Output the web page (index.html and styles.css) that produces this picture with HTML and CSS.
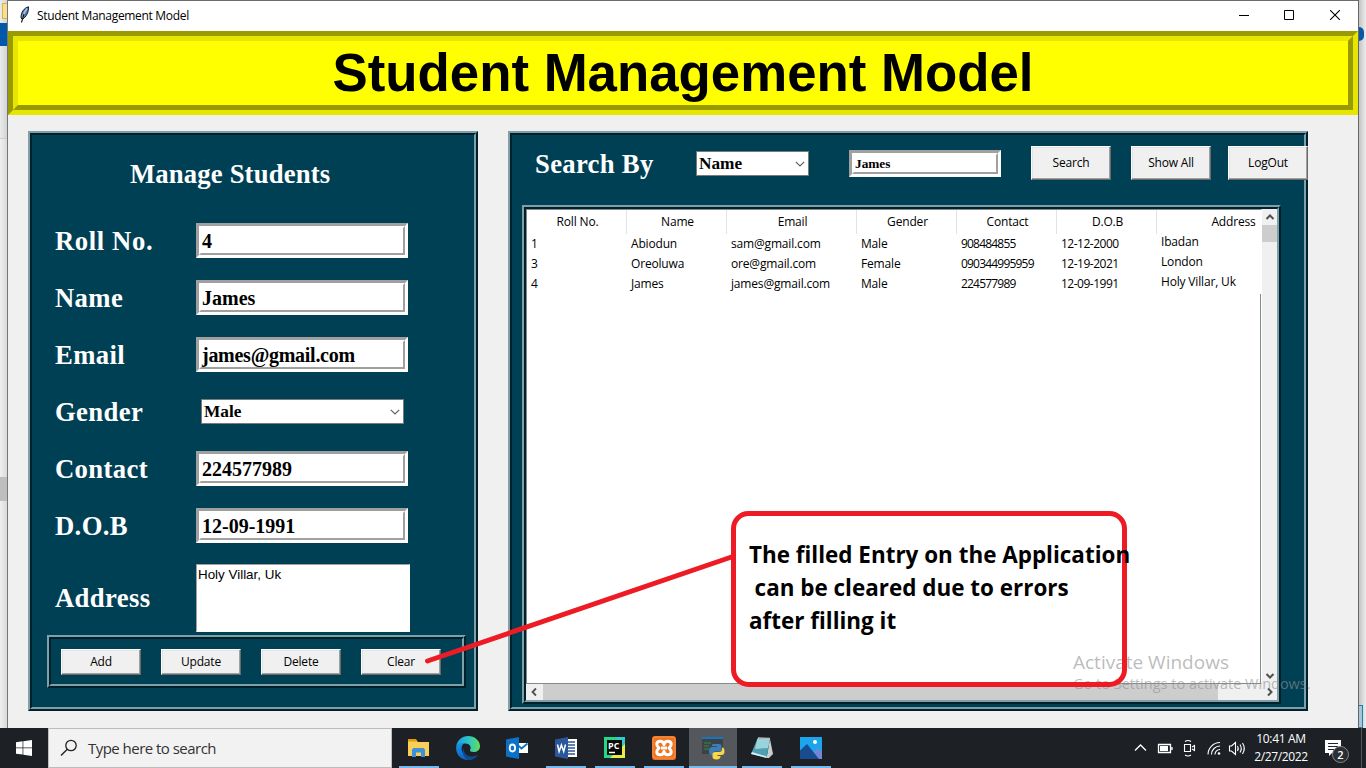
FILE: index.html
```html
<!DOCTYPE html>
<html lang="en">
<head>
<meta charset="utf-8">
<title>Student Management Model</title>
<link rel="stylesheet" href="styles.css">
</head>
<body>
<div class="screen">
  <div class="stage">
    <div class="edge edge-left"><i class="folder-bit"></i><i class="blue-bit"></i><i class="grey-bit"></i><i class="thumb-bit"></i></div>
    <div class="window">
      <header class="titlebar">
        <svg class="feather" width="12" height="18" viewBox="0 0 12 18"><path d="M9.500.8C5 2 2 6 2 12l1.600 1.200C7 11 10 6 9.500.8z" fill="#4f7ab5" stroke="#151a22" stroke-width="1"/><path d="M8 2.500C5.500 5.500 4 9 3.600 12" stroke="#a9c8ee" stroke-width="1.600" fill="none"/><path d="M5 8L2.500 16.500" stroke="#111" stroke-width="1.100"/></svg>
        <span class="caption">Student Management Model</span>
        <div class="controls">
          <svg width="10" height="10"><path d="M0 5.500h10" stroke="#000"/></svg>
          <svg width="10" height="10"><path d="M.5.5h9v9h-9z" fill="none" stroke="#000"/></svg>
          <svg width="10" height="10"><path d="M0 0l10 10M10 0L0 10" stroke="#000" stroke-width="1.100"/></svg>
        </div>
      </header>
      <div class="banner"><h1>Student Management Model</h1></div>
      <main class="panels">
        <section class="panel manage">
          <h2>Manage Students</h2>
          <div class="row"><label class="wide">Roll No.</label><div class="entry">4</div></div>
          <div class="row"><label>Name</label><div class="entry">James</div></div>
          <div class="row"><label>Email</label><div class="entry mail">james@gmail.com</div></div>
          <div class="row"><label>Gender</label><div class="combo">Male<svg width="10" height="6"><path d="M.8.8L5 5 9.200.8" fill="none" stroke="#606060" stroke-width="1.200"/></svg></div></div>
          <div class="row"><label>Contact</label><div class="entry">224577989</div></div>
          <div class="row"><label>D.O.B</label><div class="entry">12-09-1991</div></div>
          <div class="row address"><label>Address</label><div class="memo">Holy Villar, Uk</div></div>
          <div class="actions">
            <button>Add</button><button>Update</button><button>Delete</button><button>Clear</button>
          </div>
        </section>
        <section class="panel browse">
          <div class="search">
            <h2>Search By</h2>
            <div class="combo">Name<svg width="10" height="6"><path d="M.8.8L5 5 9.200.8" fill="none" stroke="#606060" stroke-width="1.200"/></svg></div>
            <div class="entry small">James</div>
            <button>Search</button><button>Show All</button><button>LogOut</button>
          </div>
          <div class="tableframe">
            <div class="tree">
              <div class="tr head"><b>Roll No.</b><b>Name</b><b>Email</b><b>Gender</b><b>Contact</b><b>D.O.B</b><b>Address</b></div>
              <div class="tr"><span>1</span><span>Abiodun</span><span>sam@gmail.com</span><span>Male</span><span class="num">908484855</span><span class="date">12-12-2000</span><span>Ibadan</span></div>
              <div class="tr"><span>3</span><span>Oreoluwa</span><span>ore@gmail.com</span><span>Female</span><span class="num">090344995959</span><span class="date">12-19-2021</span><span>London</span></div>
              <div class="tr"><span>4</span><span>James</span><span>james@gmail.com</span><span>Male</span><span class="num">224577989</span><span class="date">12-09-1991</span><span>Holy Villar, Uk</span></div>
            </div>
            <div class="vbar">
              <svg width="16" height="16"><path d="M4.500 10L8 6.500 11.500 10" fill="none" stroke="#505050" stroke-width="2"/></svg>
              <i></i>
              <svg width="16" height="16"><path d="M4.500 6L8 9.500 11.500 6" fill="none" stroke="#505050" stroke-width="2"/></svg>
            </div>
            <div class="hbar">
              <svg width="17" height="16"><path d="M10 4.500L6.500 8 10 11.500" fill="none" stroke="#505050" stroke-width="1.800"/></svg>
              <i></i>
              <svg width="17" height="16"><path d="M7 4.500L10.500 8 7 11.500" fill="none" stroke="#505050" stroke-width="2"/></svg>
            </div>
          </div>
        </section>
      </main>
    </div>
    <div class="edge edge-right"><i class="dot-bit"></i><i class="select-bit"></i></div>
  </div>

  <footer class="taskbar">
    <div class="start"><svg width="16" height="16" viewBox="0 0 16 16" fill="#fff"><path d="M0 2.300L6.600 1.300v6.200H0zM7.300 1.200L16 0v7.500H7.300zM0 8.300h6.600v6.300L0 13.700zM7.300 8.300H16V16l-8.700-1.300z"/></svg></div>
    <div class="searchbox"><svg width="18" height="18" viewBox="0 0 18 18"><circle cx="11" cy="6.500" r="5.200" fill="none" stroke="#222" stroke-width="1.300"/><path d="M7.300 10.300L1 16.600" stroke="#222" stroke-width="1.400"/></svg><span>Type here to search</span></div>
    <div class="apps">
      <div class="app run"><svg width="24" height="24"><path d="M1 4h8l2 2h11v14H1z" fill="#f9cf5a"/><path d="M1 3h8l1.500 2.500H1z" fill="#e29c0b"/><path d="M5 21v-7.500L6.500 12h10l1.500 1.500V21h-4v-4.500H9V21z" fill="#3c92d9"/></svg></div>
      <div class="app"><svg width="24" height="24" viewBox="0 0 24 24"><defs><linearGradient id="e1" x1="0" x2="1"><stop offset="0" stop-color="#1b9de2"/><stop offset=".55" stop-color="#2fc5c3"/><stop offset="1" stop-color="#63df55"/></linearGradient><linearGradient id="e2" x1="0" y1="0" x2="0" y2="1"><stop offset="0" stop-color="#1697e8"/><stop offset="1" stop-color="#0b62c4"/></linearGradient></defs><path d="M.2 11C1 4 6 0 12 0c7 0 12 5 12 10 0 4-3 6-6.500 6-2.500 0-4-1-3.500-2 2-3-.5-6.500-4.500-6.500C5.500 7.500 1 9 .2 11z" fill="url(#e1)"/><path d="M.1 12C.1 8 4 6.500 8 7c-3 3-3.500 8 .5 12 3 2.600 8 3 13 0C19 22.500 16 24 12 24 5 24 .1 18.500.1 12z" fill="url(#e2)"/><path d="M9 10c-3 4 0 10 6 10.500 3 .2 5-.4 7-1.500-2.500 3.500-6 5-10 5C7 22 5 15 9 10z" fill="#0d4a91"/></svg></div>
      <div class="app"><svg width="24" height="24"><path d="M10 7h13v10H10z" fill="#fff"/><path d="M11 7.500l5.500 5 6-5" fill="none" stroke="#0e6fc5" stroke-width="1.700"/><path d="M1 3.500L14 1v22L1 20.500z" fill="#0b70c7"/><ellipse cx="7.400" cy="12" rx="2.700" ry="3.500" fill="none" stroke="#fff" stroke-width="1.800"/></svg></div>
      <div class="app run"><svg width="24" height="24"><path d="M12 3h11v18H12z" fill="#fff"/><path d="M14 6h7M14 9h7M14 12h7M14 15h7M14 18h7" stroke="#2d579b" stroke-width="1.300"/><path d="M1 3.500L14 1v22L1 20.500z" fill="#2b569a"/><path d="M3.500 8.500l1.600 7 2.300-6.500 2.300 6.500 1.800-7" fill="none" stroke="#fff" stroke-width="1.500"/></svg></div>
      <div class="app run"><svg width="24" height="24"><path d="M1 1h21v21H1z" fill="#24d885"/><path d="M12 1h10v10z" fill="#35c9ce"/><path d="M22 8v14H7z" fill="#e8ef42"/><path d="M4 4h15v15H4z" fill="#090909"/><path d="M6 16.500h6" stroke="#fff" stroke-width="1.500"/><text x="5" y="13" class="pc">PC</text></svg></div>
      <div class="app run"><svg width="24" height="24"><rect width="24" height="24" rx="3" fill="#ef7420"/><rect x="1" y="1" width="22" height="21" rx="3" fill="none" stroke="#f89a56" stroke-width=".8"/><path d="M12 8.500C11.500 4 4.800 4.300 4.800 8.300c0 2 1.400 2.700 2.200 3.700-.8 1-2.200 1.700-2.200 3.700 0 4 6.700 4.300 7.200-.2.500 4.500 7.200 4.200 7.200.2 0-2-1.400-2.700-2.200-3.700.8-1 2.200-1.700 2.200-3.700 0-4-6.700-4.300-7.200.2zM9 12h6" fill="none" stroke="#fff" stroke-width="3" stroke-linejoin="round"/></svg></div>
      <div class="app run active"><svg width="24" height="24"><path d="M1 1h21v17H1z" fill="#3c4245"/><path d="M1 1h21v2H1z" fill="#1675bd"/><path d="M3 7h7M3 10h5M3 13h5" stroke="#367445" stroke-width="1.300"/><path d="M12 8h6c2 0 2.500 1 2.500 3v2c0 2-1 2.500-3 2.500h-3.500c-1.500 0-2 1-2 3.500-3 0-4-1-4-4 0-2.500 1-4 3-4h5v-.8h-5C11 8.800 11 8 12 8z" fill="#3c7fb7"/><path d="M21 11.500c2 0 2.500 2 2.500 4s-1 3.500-3 3.500h-4v1h3c0 2-1 3.500-4 3.500s-4-1-4-3v-2c0-1.500 1-2.500 2.500-2.500h4C20 16 21 15 21 13z" fill="#fbd646"/></svg></div>
      <div class="app run"><svg width="24" height="24"><path d="M20 3l3 15-4 4-2.500 0z" fill="#c9cfcd"/><path d="M7.500 2.500L20 3l-3.500 19L1 18z" fill="#4f9fb0"/><path d="M7.500 2.500L20 3l-2 9L5 13z" fill="#9bd3dd"/><path d="M1 18l15.500 4 .3-1.500L2 16z" fill="#d8eff0"/><path d="M8 2l12 .6" stroke="#bbb" stroke-width="1.500"/></svg></div>
      <div class="app run"><svg width="24" height="24"><path d="M1 1h22v22H1z" fill="#1ca5ec"/><path d="M11 19l7.500-7 4.500 4v7H12z" fill="#7387d9"/><path d="M1 14.500L8 8l12 15H1z" fill="#174c91"/><circle cx="16" cy="6" r="2" fill="#fff"/></svg></div>
    </div>
    <div class="tray">
      <svg class="status" width="120" height="40" fill="none" stroke="#fff" stroke-width="1.300"><path d="M4 22.500L9.500 17 15 22.500"/><path d="M27.500 16.500h12v8h-12zM41 19v3"/><path d="M29 18h8v5h-8z" fill="#fff" stroke="none"/><path d="M53.500 16.500h6v7h-6zM61 19l2.500-1.500v5L61 21M54 13.500q3-2 6 0M54 27q3 2 6 0" stroke-width="1.100"/><path d="M77 26.500A12 12 0 0 1 89 14.500M80.500 26.500A8.500 8.500 0 0 1 89 18M84 26.500A5 5 0 0 1 89 21.500" stroke-width="1.100"/><circle cx="88" cy="25.500" r="1.300" fill="#fff" stroke="none"/><path d="M98.500 18h2l4-3.500v12l-4-3.500h-2zM106.500 18q1.500 2.500 0 5M109 16.500q2.500 4 0 8M111.500 15q3.500 5.500 0 11" stroke-width="1.100"/></svg>
      <div class="clock"><span>10:41 AM</span><span>2/27/2022</span></div>
      <div class="notice"><svg width="18" height="18"><path d="M1 1h16v13H8l-3 3v-3H1z" fill="#fff"/><path d="M4 4.500h10M4 7.500h10M4 10.500h6" stroke="#20242a" stroke-width="1.200"/></svg><b>2</b></div>
      <i class="peek"></i>
    </div>
  </footer>

  <div class="watermark"><p>Activate Windows</p><small>Go to Settings to activate Windows.</small></div>
  <div class="note">
    <svg width="710" height="180"><path d="M7.500 151L313 46.500" stroke="#ed1c24" stroke-width="5" stroke-linecap="round"/><rect x="313.500" y="3.500" width="391" height="171" rx="15" fill="none" stroke="#ed1c24" stroke-width="5"/></svg>
    <div class="notetext"><span>The filled Entry on the Application</span><span class="indent">can be cleared due to errors</span><span>after filling it</span></div>
  </div>
</div>
</body>
</html>
```
FILE: styles.css
```css
* { box-sizing: border-box; }
body { margin: 0; background: #f0f0f0; overflow: hidden; }
h1, h2, p { margin: 0; }
svg { display: block; flex: none; }
.screen { position: relative; width: 1366px; height: 768px; overflow: hidden; display: flex; flex-direction: column; font-family: "Open Sans", "Noto Sans", sans-serif; }
.stage { display: flex; height: 728px; }

/* slivers of the windows behind */
.edge { position: relative; width: 8px; }
.edge i { position: absolute; }
.edge-left { border-right: 1px solid #777; background: linear-gradient(90deg, #eaebec, #d2d3d5); }
.edge-right { border-left: 1px solid #666; background: linear-gradient(90deg, #c4c4c4, #ececec); }
.folder-bit { left: 2px; top: 3px; width: 5px; height: 16px; background: #f7df91; border: 1px solid #dcb637; border-right: 0; }
.blue-bit { left: 0; top: 23px; width: 7px; height: 23px; background: #0058a6; }
.grey-bit { left: 0; top: 138px; width: 7px; height: 590px; background: linear-gradient(90deg, #f0f0f0, #dadada); border-top: 1px solid #ccc; }
.thumb-bit { left: 0; top: 477px; width: 7px; height: 24px; background: #bebebe; }
.dot-bit { left: 0; top: 27px; width: 5px; height: 14px; background: #0a58a8; border-radius: 0 7px 7px 0; }
.select-bit { left: 0; top: 705px; width: 4px; height: 23px; background: #a9c4d4; border: 1px solid #1c80b5; border-left: 0; }

.window { width: 1350px; display: flex; flex-direction: column; background: #f0f0f0; border-top: 1px solid #6b6b6b; }
.titlebar { height: 30px; background: #fff; display: flex; align-items: center; padding: 0 18px 2px 11px; }
.caption { font-size: 12px; margin-left: 6px; width: 160px; white-space: nowrap; letter-spacing: -.32px; }
.controls { margin-left: auto; display: flex; gap: 36px; }
.controls svg:first-child { margin-right: -1px; }
.banner { height: 84px; background: #ff0; border: 5px solid; border-color: #990 #e6e600 #e6e600 #990; }
.banner h1 { height: 74px; border: 5px solid; border-color: #e6e600 #990 #990 #e6e600; text-align: center; font: bold 52.800px/64px "Liberation Sans", Arial, sans-serif; color: #000; white-space: nowrap; }

.panels { display: flex; gap: 30px; padding: 16px 0 0 20px; }
.panel, .tableframe, .actions { position: relative; border: 2px solid; border-color: #7f9fa9 #00202a #00202a #7f9fa9; background: #004054; }
.panel::before, .tableframe::before, .actions::before { content: ""; position: absolute; inset: 0; border: 2px solid; border-color: #00202a #7f9fa9 #7f9fa9 #00202a; pointer-events: none; }
.panel { height: 580px; }
.panel h2, .row label { font: bold 26.700px/32px "Liberation Serif", "Times New Roman", serif; color: #fff; white-space: nowrap; letter-spacing: .15px; }
.manage { width: 450px; padding-top: 25px; }
.manage h2 { padding-left: 100px; margin-bottom: 22px; }
.row { display: flex; align-items: center; height: 57px; padding-left: 25px; }
.row label { width: 141px; letter-spacing: .35px; }
.row .wide { letter-spacing: .6px; }
.entry { width: 212px; height: 35px; position: relative; background: #fff; border: 3px solid; border-color: #a0a0a0 #fff #fff #a0a0a0; padding-left: 3px; font: bold 20px/30px "Liberation Serif", "Times New Roman", serif; color: #000; }
.entry::after { content: ""; position: absolute; inset: 0; border: 2px solid; border-color: #fff #a0a0a0 #a0a0a0 #fff; }
.mail { letter-spacing: -.27px; }
.combo { width: 203px; height: 25px; margin-left: 5px; background: #fff; border: 1px solid #7a7a7a; display: flex; align-items: center; justify-content: space-between; padding: 0 3px 0 2px; font: bold 17.300px/23px "Liberation Serif", "Times New Roman", serif; color: #000; }
.address { height: 68px; margin-top: 10px; }
.memo { width: 214px; height: 68px; background: #fff; border: 1px solid; border-color: #a0a0a0 #fff #fff #a0a0a0; padding: 1px; font: 13.400px/17px "Liberation Sans", Arial, sans-serif; }
.actions { width: 419px; height: 53px; margin: 3px 0 0 17px; display: flex; gap: 20px; padding: 12px 0 0 12px; }
button { width: 80px; height: 26px; flex: none; padding: 0; background: #f0f0f0; border: 1px solid; border-color: #fff #696969 #696969 #fff; box-shadow: inset -1px -1px #a0a0a0, inset 1px 1px #e3e3e3; font: 12px/20px "Open Sans", "Noto Sans", sans-serif; letter-spacing: -.2px; color: #000; }

.browse { width: 800px; }
.search { display: flex; align-items: flex-start; padding: 13px 0 0 25px; height: 72px; }
.search h2 { width: 161px; margin-top: 2px; letter-spacing: .3px; }
.search .combo { width: 113px; margin: 5px 40px 0 0; }
.search .entry { width: 152px; height: 27px; margin: 4px 30px 0 0; font-size: 13.300px; line-height: 22px; }
.search button { position: relative; height: 34px; margin-right: 20px; }
.search button:last-child { margin: 0 -4px 0 -3px; }
.tableframe { width: 759px; height: 499px; margin-left: 12px; padding: 2px 3px 2px 2px; display: grid; grid-template: 475px 16px / 736px 16px; background: #f0f0f0; }
.tree { background: linear-gradient(#7f8b90 0 0) 100% 0 / 1px 100% no-repeat #fff; border: 1px solid #7f8b90; border-right-color: #fff; overflow: hidden; }
.tr { display: grid; grid-template-columns: 100px 100px 130px 100px 100px 100px 152px; height: 20px; font-size: 12px; line-height: 19px; white-space: nowrap; letter-spacing: -.17px; background: #fff; }
.tr span { padding-left: 4px; }
.tr span:last-child { margin-top: -2px; }
.tr .num { letter-spacing: -.85px; letter-spacing: -.8px; }
.tr .date { letter-spacing: -.5px; }
.head { height: 24px; line-height: 24px; }
.head b { font-weight: 400; text-align: center; border-right: 1px solid #e3e3e3; padding-left: 2px; }
.vbar { display: flex; flex-direction: column; background: #f0f0f0; }
.vbar i { height: 17px; background: #cdcdcd; margin-bottom: auto; }
.hbar { grid-column: 1 / 3; display: flex; background: #f0f0f0; }
.hbar i { width: 675px; background: #cdcdcd; margin-right: auto; }

.taskbar { height: 40px; display: flex; background: #1d2126; }
.start { width: 48px; display: grid; place-items: center; }
.searchbox { width: 344px; display: flex; align-items: center; gap: 10px; padding-left: 11px; background: #f2f2f2; border: 1px solid #bdbdbd; color: #333; font-size: 15px; letter-spacing: -.53px; white-space: nowrap; }
.apps { display: flex; padding-left: 3px; gap: 1px; }
.app { width: 48px; height: 40px; padding: 8px 12px; position: relative; }
.run::after { content: ""; position: absolute; left: 4px; right: 4px; bottom: 0; height: 2px; background: #76b9ed; }
.active { background: #54585c; }
.active::after { left: 0; right: 0; }
.pc { font: bold 9px "Open Sans", sans-serif; fill: #fff; }
.tray { margin-left: auto; display: flex; color: #fff; }
.status { margin-right: -8px; }
.clock { width: 76px; display: flex; flex-direction: column; align-items: center; font-size: 12px; line-height: 18px; padding-top: 2px; letter-spacing: -.35px; }
.notice { width: 42px; position: relative; padding: 11px 0 0 5px; }
.notice b { position: absolute; left: 13px; top: 18px; width: 17px; height: 17px; border: 1px solid #888; border-radius: 50%; background: #2b2f34; font: 600 11px/15px "Open Sans", sans-serif; text-align: center; }
.peek { width: 5px; border-left: 1px solid #555; }

.watermark { position: absolute; left: 1073px; top: 651px; color: rgba(145,145,145,.62); white-space: nowrap; }
.watermark p { font-size: 19px; line-height: 22px; }
.watermark small { display: block; font-size: 14.500px; line-height: 22px; }
.note { position: absolute; left: 420px; top: 510px; }
.notetext { position: absolute; left: 329px; top: 27px; display: flex; flex-direction: column; font: bold 24px/33px "Open Sans", sans-serif; color: #000; white-space: pre; transform: scaleX(.935); transform-origin: 0 50%; }
.indent { padding-left: 6px; }
```
